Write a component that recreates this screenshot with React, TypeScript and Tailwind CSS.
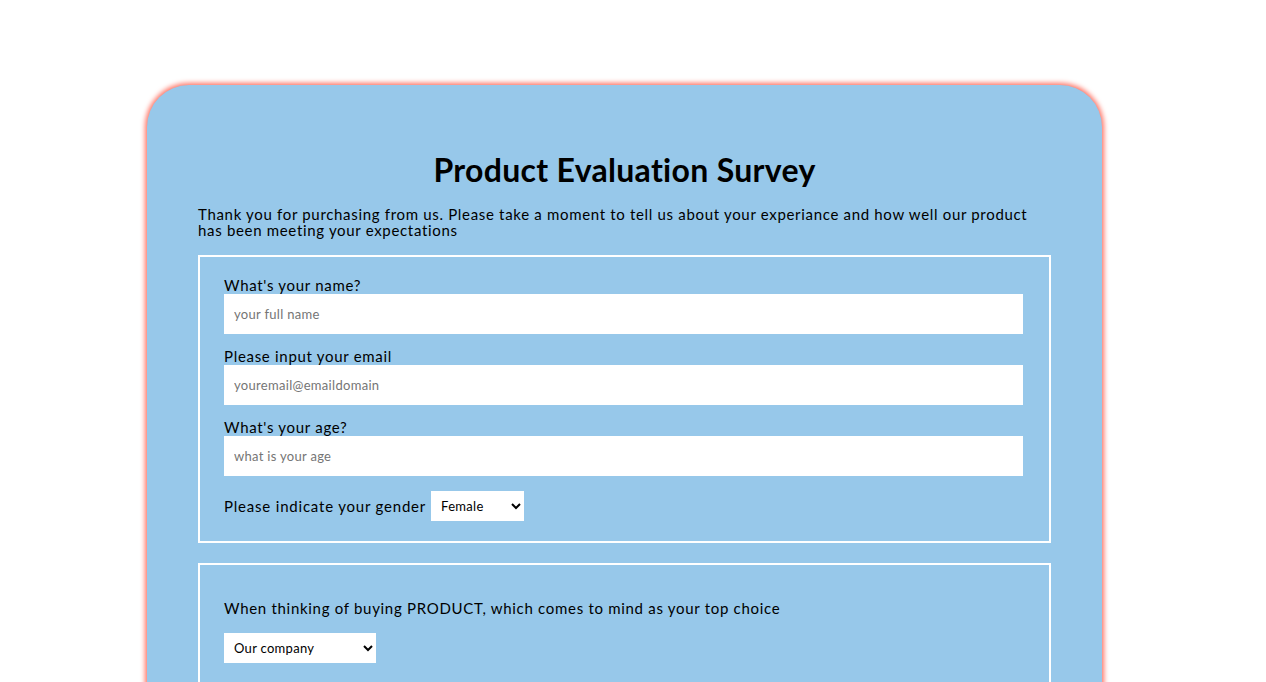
import React from "react";

export default function App() {
  const font = { fontFamily: '"Lato", "Noto Sans", sans-serif' };
  return (
    <div className="min-h-screen bg-white pt-[85px]" style={font}>
      <div className="ml-[147px] w-[955px] rounded-t-[42px] bg-[#97c8ea] shadow-[0_0_5px_2px_#ff7566] px-[51px] pt-[67px] pb-[40px] text-black">
        <h1 className="text-center text-[32px] font-bold leading-[36px] tracking-[0.3px]">Product Evaluation Survey</h1>
        <p className="mt-[18px] text-[15px] leading-[16px] tracking-[0.68px]">
          Thank you for purchasing from us. Please take a moment to tell us about your experiance and how well our product has been meeting your expectations
        </p>
        <fieldset className="mt-[17px] border-2 border-white pl-[24px] pr-[26px] pt-[19px] pb-[20px]">
          <label className="block text-[15px] leading-[18px] tracking-[0.7px]">What's your name?</label>
          <input className="block h-[40px] w-full bg-white px-[10px] text-[13px] tracking-[0.3px] outline-none placeholder:text-[#757575]" placeholder="your full name" />
          <label className="mt-[13px] block text-[15px] leading-[18px] tracking-[0.7px]">Please input your email</label>
          <input className="block h-[40px] w-full bg-white px-[10px] text-[13px] tracking-[0.3px] outline-none placeholder:text-[#757575]" placeholder="youremail@emaildomain" />
          <label className="mt-[13px] block text-[15px] leading-[18px] tracking-[0.7px]">What's your age?</label>
          <input className="block h-[40px] w-full bg-white px-[10px] text-[13px] tracking-[0.3px] outline-none placeholder:text-[#757575]" placeholder="what is your age" />
          <div className="mt-[15px] flex items-center gap-[5px]">
            <span className="text-[15px] tracking-[0.8px]">Please indicate your gender</span>
            <select className="h-[30px] w-[93px] bg-white pl-[6px] text-[13px] tracking-[0.3px] outline-none" defaultValue="Female">
              <option>Female</option>
              <option>Male</option>
            </select>
          </div>
        </fieldset>
        <fieldset className="mt-[20px] border-2 border-white pl-[24px] pr-[26px] pt-[34px] pb-[40px]">
          <p className="text-[15px] leading-[18px] tracking-[0.7px]">When thinking of buying PRODUCT, which comes to mind as your top choice</p>
          <select className="mt-[16px] h-[30px] w-[152px] bg-white pl-[6px] text-[13px] tracking-[0.3px] outline-none" defaultValue="Our company">
            <option>Our company</option>
            <option>Other</option>
          </select>
        </fieldset>
      </div>
    </div>
  );
}
